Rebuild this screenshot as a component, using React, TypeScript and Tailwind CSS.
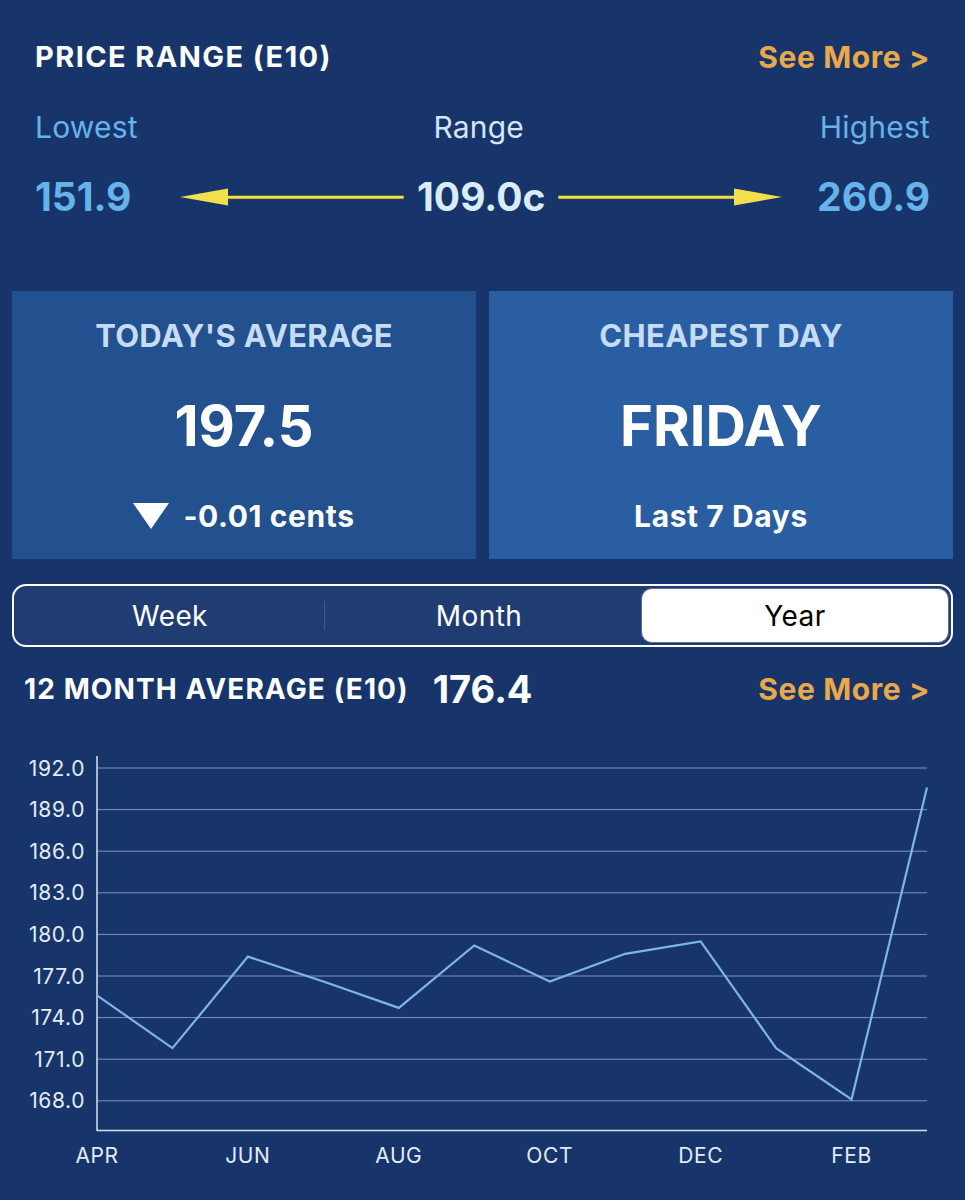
import React from 'react';

const months = ['APR', 'MAY', 'JUN', 'JUL', 'AUG', 'SEP', 'OCT', 'NOV', 'DEC', 'JAN', 'FEB', 'MAR'];
const values = [175.6, 171.8, 178.4, 176.6, 174.7, 179.2, 176.6, 178.6, 179.5, 171.8, 168.1, 190.6];
const ticks = [192, 189, 186, 183, 180, 177, 174, 171, 168];

// chart geometry, in svg coordinates
const X0 = 97;
const X1 = 927;
const Y_TOP = 28; // y of 192.0
const PER_UNIT = 41.6 / 3;

const xAt = (i: number) => X0 + ((X1 - X0) / 11) * i;
const yAt = (v: number) => Y_TOP + (192 - v) * PER_UNIT;

function Arrow({ dir }: { dir: 'left' | 'right' }) {
  return (
    <svg width="224" height="24" viewBox="0 0 224 24" className="shrink-0">
      <g transform={dir === 'right' ? 'translate(224 0) scale(-1 1)' : undefined}>
        <rect x="46" y="10.5" width="178" height="3.5" fill="#f2df4e" stroke="#3a4433" strokeWidth="0.6" />
        <path d="M0 12 L48 3.5 L48 20.5 Z" fill="#f2df4e" />
      </g>
    </svg>
  );
}

function YearChart() {
  const points = values.map((v, i) => `${xAt(i)},${yAt(v)}`).join(' ');
  return (
    <svg width="965" height="460" viewBox="0 0 965 460" className="block">
      {ticks.map((t) => (
        <g key={t}>
          <line x1={X0} x2={X1} y1={yAt(t)} y2={yAt(t)} stroke="#8193b5" strokeWidth="1" />
          <text
            x="85"
            y={yAt(t) + 7.5}
            textAnchor="end"
            fontSize="21"
            letterSpacing="0.6"
            fill="#e4ebf6"
            fontFamily="Inter, sans-serif"
          >
            {t.toFixed(1)}
          </text>
        </g>
      ))}
      <line x1={X0} x2={X0} y1="16" y2="391" stroke="#d9e2f0" strokeWidth="1.5" />
      <line x1={X0} x2={X1} y1="390.5" y2="390.5" stroke="#d9e2f0" strokeWidth="1.5" />
      <polyline points={points} fill="none" stroke="#7fb4e6" strokeWidth="2.2" strokeLinejoin="miter" />
      {months.map((m, i) =>
        i % 2 === 0 ? (
          <text
            key={m}
            x={xAt(i)}
            y="423"
            textAnchor="middle"
            fontSize="21"
            letterSpacing="0.6"
            fill="#e4ebf6"
            fontFamily="Inter, sans-serif"
          >
            {m}
          </text>
        ) : null
      )}
    </svg>
  );
}

export default function App() {
  return (
    <div className="w-[965px] h-[1200px] overflow-hidden bg-[#17356b] font-['Inter',sans-serif]">
      {/* Price range */}
      <div className="px-[35px] pt-[37px]">
        <div className="flex h-[40px] items-center justify-between">
          <h2 className="text-[29px] font-bold tracking-[1.4px] text-white">PRICE RANGE (E10)</h2>
          <span className="text-[30px] font-bold tracking-[0.6px] text-[#e9a94b]">See More &gt;</span>
        </div>
        <div className="mt-[30px] flex h-[40px] items-center justify-between text-[30px] tracking-[0.2px]">
          <span className="text-[#66b3ea]">Lowest</span>
          <span className="text-[#d3e6f6]">Range</span>
          <span className="text-[#66b3ea]">Highest</span>
        </div>
        <div className="mt-[25px] flex h-[50px] items-center text-[39px] font-bold">
          <span className="text-[#66b3ea]">151.9</span>
          <div className="ml-[49px]">
            <Arrow dir="left" />
          </div>
          <span className="flex-1 text-center text-[#d8ecfa]">109.0c</span>
          <Arrow dir="right" />
          <span className="ml-[35px] text-[#66b3ea]">260.9</span>
        </div>
      </div>

      {/* Cards */}
      <div className="mt-[69px] grid grid-cols-2 gap-[13px] px-[12px]">
        <div className="flex h-[268px] flex-col items-center bg-[#23508f] pt-[25px]">
          <div className="flex h-[40px] items-center text-[31px] font-bold tracking-[0.3px] text-[#c6dcf4]">TODAY'S AVERAGE</div>
          <div className="mt-[35px] flex h-[70px] items-center text-[56px] font-bold text-white">197.5</div>
          <div className="mt-[35px] flex h-[40px] items-center gap-[14px] text-[30px] font-bold tracking-[0.6px] text-white">
            <svg width="36" height="26" viewBox="0 0 36 26">
              <path d="M0 0 H36 L18 26 Z" fill="#ffffff" />
            </svg>
            <span>-0.01 cents</span>
          </div>
        </div>
        <div className="flex h-[268px] flex-col items-center bg-[#2a5ea2] pt-[25px]">
          <div className="flex h-[40px] items-center text-[31px] font-bold tracking-[0.3px] text-[#c6dcf4]">CHEAPEST DAY</div>
          <div className="mt-[35px] flex h-[70px] items-center text-[56px] font-bold text-white">FRIDAY</div>
          <div className="mt-[35px] flex h-[40px] items-center text-[30px] font-bold tracking-[0.6px] text-white">Last 7 Days</div>
        </div>
      </div>

      {/* Period switch */}
      <div className="mx-[12px] mt-[25px] flex h-[63px] rounded-[14px] border-2 border-white bg-[#1f3d72] p-[2px]">
        <button className="flex flex-1 items-center justify-center text-[28px] tracking-[0.4px] text-white">Week</button>
        <div className="my-[13px] w-px bg-[#3d5a8a]" />
        <button className="flex flex-1 items-center justify-center text-[28px] tracking-[0.4px] text-white">Month</button>
        <div className="flex flex-1 pl-[8px]">
          <button className="flex flex-1 items-center justify-center rounded-[11px] border border-[#5c6f93] bg-white text-[28px] tracking-[0.4px] text-black">
            Year
          </button>
        </div>
      </div>

      {/* 12 month average */}
      <div className="mt-[22px] flex h-[40px] items-center pl-[24px] pr-[35px]">
        <h2 className="text-[28px] font-bold tracking-[1.1px] text-white">12 MONTH AVERAGE (E10)</h2>
        <span className="ml-[24px] text-[38px] font-bold text-white">176.4</span>
        <span className="ml-auto text-[30px] font-bold tracking-[0.6px] text-[#e9a94b]">See More &gt;</span>
      </div>

      <div className="mt-[31px]">
        <YearChart />
      </div>
    </div>
  );
}
